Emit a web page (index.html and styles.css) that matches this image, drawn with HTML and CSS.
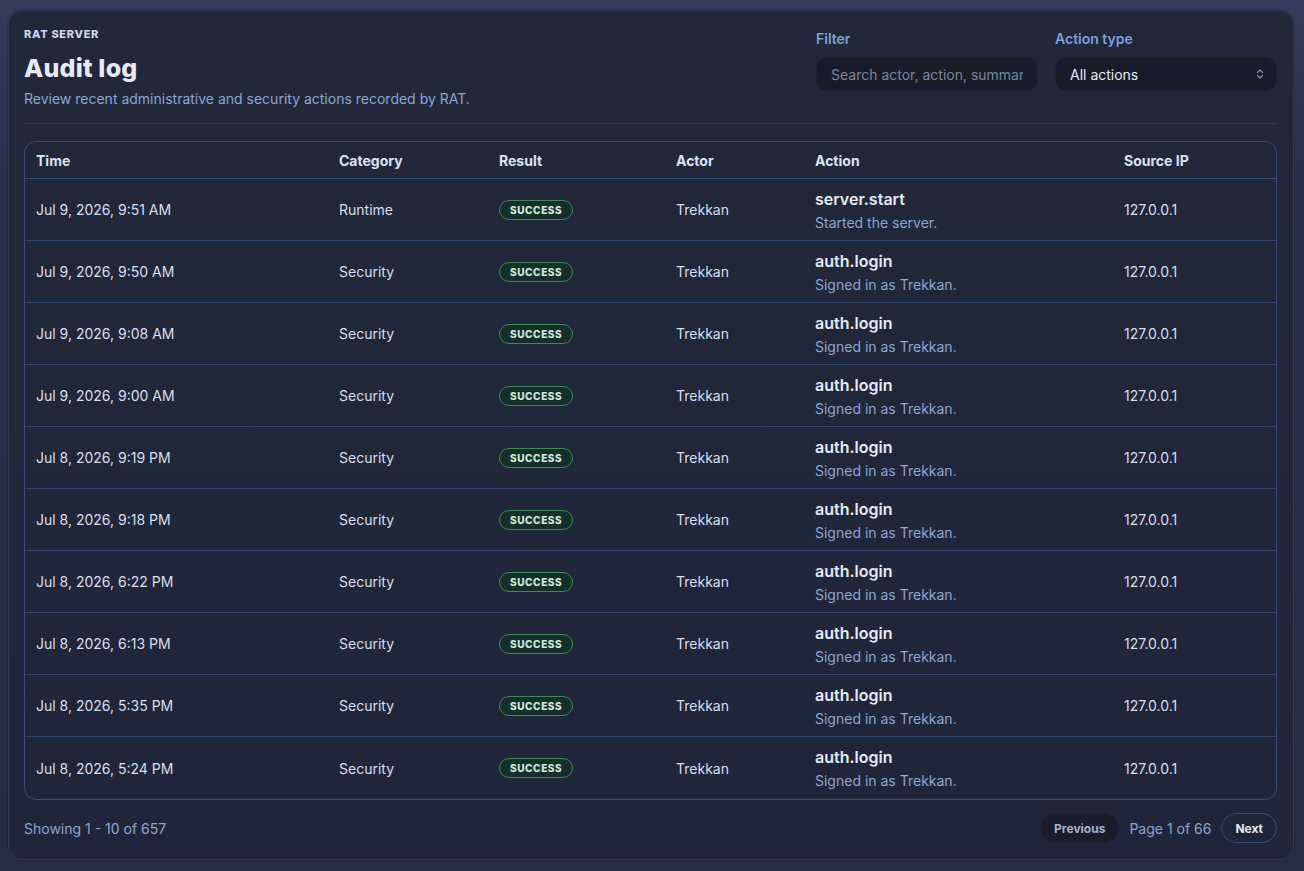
FILE: index.html
```html
<!DOCTYPE html>
<html lang="en">
<head>
    <meta charset="UTF-8">
    <meta name="viewport" content="width=device-width, initial-scale=1.0">
    <title>Audit log - RAT Server</title>
    <link rel="stylesheet" href="styles.css">
</head>
<body>
    <div class="panel">
        <div class="header">
            <div class="title-block">
                <div class="eyebrow">RAT SERVER</div>
                <h1>Audit log</h1>
                <p class="subtitle">Review recent administrative and security actions recorded by RAT.</p>
            </div>
            <div class="filters">
                <label class="field field-search">
                    <span class="field-label">Filter</span>
                    <input type="text" placeholder="Search actor, action, summary">
                </label>
                <label class="field field-select">
                    <span class="field-label">Action type</span>
                    <span class="select">
                        All actions
                        <svg class="chevrons" width="8" height="12" viewBox="0 0 8 12" fill="none" stroke="currentColor" stroke-width="1.2" stroke-linecap="round" stroke-linejoin="round">
                            <path d="M1.5 4.5 4 2l2.5 2.5"/>
                            <path d="M1.5 7.5 4 10l2.5-2.5"/>
                        </svg>
                    </span>
                </label>
            </div>
        </div>

        <div class="table-wrap">
            <table>
                <colgroup>
                    <col class="c-time">
                    <col class="c-cat">
                    <col class="c-result">
                    <col class="c-actor">
                    <col class="c-action">
                    <col class="c-ip">
                </colgroup>
                <thead>
                    <tr>
                        <th>Time</th>
                        <th>Category</th>
                        <th>Result</th>
                        <th>Actor</th>
                        <th>Action</th>
                        <th>Source IP</th>
                    </tr>
                </thead>
                <tbody id="logRows"></tbody>
            </table>
        </div>

        <div class="footer">
            <span class="showing">Showing 1 - 10 of 657</span>
            <div class="pager">
                <button class="btn btn-prev">Previous</button>
                <span class="page-info">Page 1 of 66</span>
                <button class="btn btn-next">Next</button>
            </div>
        </div>
    </div>

    <script>
        const logs = [
            ["Jul 9, 2026, 9:51 AM", "Runtime", "server.start", "Started the server."],
            ["Jul 9, 2026, 9:50 AM", "Security", "auth.login", "Signed in as Trekkan."],
            ["Jul 9, 2026, 9:08 AM", "Security", "auth.login", "Signed in as Trekkan."],
            ["Jul 9, 2026, 9:00 AM", "Security", "auth.login", "Signed in as Trekkan."],
            ["Jul 8, 2026, 9:19 PM", "Security", "auth.login", "Signed in as Trekkan."],
            ["Jul 8, 2026, 9:18 PM", "Security", "auth.login", "Signed in as Trekkan."],
            ["Jul 8, 2026, 6:22 PM", "Security", "auth.login", "Signed in as Trekkan."],
            ["Jul 8, 2026, 6:13 PM", "Security", "auth.login", "Signed in as Trekkan."],
            ["Jul 8, 2026, 5:35 PM", "Security", "auth.login", "Signed in as Trekkan."],
            ["Jul 8, 2026, 5:24 PM", "Security", "auth.login", "Signed in as Trekkan."]
        ];

        // Build rows
        document.getElementById("logRows").innerHTML = logs.map(log => `
            <tr>
                <td>${log[0]}</td>
                <td>${log[1]}</td>
                <td><span class="badge">SUCCESS</span></td>
                <td>Trekkan</td>
                <td>
                    <div class="action-name">${log[2]}</div>
                    <div class="action-summary">${log[3]}</div>
                </td>
                <td>127.0.0.1</td>
            </tr>
        `).join("");
    </script>
</body>
</html>
```

FILE: styles.css
```css
body {
    margin: 0;
    padding: 10px 10px 11px 8px;
    min-height: 871px;
    box-sizing: border-box;
    font-family: Inter, "Noto Sans", sans-serif;
    font-size: 14px;
    color: #dde4f3;
    background: linear-gradient(180deg, #343c5c 0%, #2a3049 20%, #262c42 100%);
}
.panel {
    background: linear-gradient(180deg, #212839 0%, #20263a 100%);
    border: 1px solid #2f3854;
    border-radius: 14px;
    padding: 16px 16px 16px 15px;
    box-shadow: 0 0 0 1px rgba(0, 0, 0, 0.15);
}
.header {
    display: flex;
    justify-content: space-between;
    border-bottom: 1px solid #2e3853;
    padding-bottom: 16px;
    margin-bottom: 17px;
}
.eyebrow {
    font-size: 11px;
    font-weight: 800;
    letter-spacing: 0.7px;
    color: #cdd6ea;
    margin-top: 0;
}
h1 {
    margin: 11px 0 0;
    font-size: 25px;
    font-weight: 800;
    letter-spacing: 0.2px;
    color: #e4eaf6;
    line-height: 32px;
}
.subtitle {
    margin: 6px 0 0;
    color: #8ea4d4;
    font-size: 14px;
}
.filters {
    display: flex;
    gap: 17px;
    margin-top: 3px;
}
.field {
    display: flex;
    flex-direction: column;
}
.field-label {
    font-size: 14px;
    font-weight: 600;
    color: #7f9fdc;
    margin-bottom: 10px;
}
.field-search input {
    width: 222px;
    height: 34px;
    box-sizing: border-box;
    border: 1px solid #1c2232;
    border-radius: 11px;
    background: #171c28;
    color: #dde4f3;
    font-family: inherit;
    font-size: 14px;
    padding: 0 14px;
    outline: none;
}
.field-search input::placeholder {
    color: #7c859a;
}
.select {
    width: 222px;
    height: 34px;
    box-sizing: border-box;
    border-radius: 11px;
    background: #171c28;
    border: 1px solid #1c2232;
    display: flex;
    align-items: center;
    justify-content: space-between;
    padding: 0 14px;
    font-size: 14px;
    color: #e4eaf6;
}
.chevrons {
    color: #8890a2;
    margin-right: -2px;
}
.table-wrap {
    border: 1px solid #3a4d78;
    border-radius: 12px;
    overflow: hidden;
}
table {
    width: 100%;
    border-collapse: collapse;
    table-layout: fixed;
}
.c-time { width: 303px; }
.c-cat { width: 160px; }
.c-result { width: 177px; }
.c-actor { width: 139px; }
.c-action { width: 309px; }
.c-ip { width: 164px; }
th, td {
    text-align: left;
    padding: 0 11px;
}
th {
    height: 36px;
    font-weight: 700;
    color: #dbe3f3;
    border-bottom: 1px solid #3a4d78;
}
td {
    height: 61px;
    color: #d8dfee;
    border-bottom: 1px solid #34456c;
}
tbody tr:last-child td {
    height: 62px;
    border-bottom: none;
}
.badge {
    display: inline-block;
    font-size: 10px;
    font-weight: 800;
    letter-spacing: 0.6px;
    color: #d3eadb;
    background: #15302a;
    border: 1px solid #3f8957;
    border-radius: 10px;
    padding: 3px 10px 3px;
    line-height: 12px;
}
.action-name {
    font-size: 16px;
    font-weight: 600;
    color: #e4eaf6;
}
.action-summary {
    margin-top: 5px;
    color: #8ea4d4;
}
.footer {
    display: flex;
    justify-content: space-between;
    align-items: center;
    margin-top: 13px;
}
.showing {
    color: #8ea4d4;
}
.pager {
    display: flex;
    align-items: center;
    gap: 10px;
}
.page-info {
    color: #8ea4d4;
}
.btn {
    font-family: inherit;
    font-size: 12px;
    font-weight: 700;
    height: 30px;
    border-radius: 15px;
    cursor: pointer;
    padding: 0 13px;
}
.btn-prev {
    background: #181d29;
    border: 1px solid #1c2232;
    color: #a6b2cc;
}
.btn-next {
    background: transparent;
    border: 1px solid #3a4d78;
    color: #e4eaf6;
}
```
